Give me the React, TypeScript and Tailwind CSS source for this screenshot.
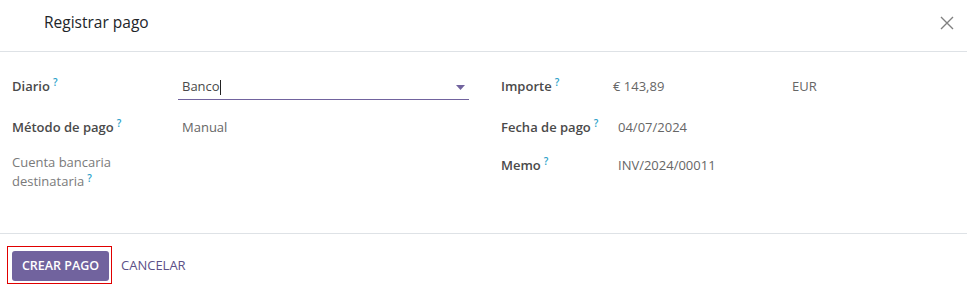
const font = { fontFamily: '"Open Sans", "Noto Sans", sans-serif' }

function Hint({ top }: { top: string }) {
  return (
    <span className={`inline-block align-top ml-[3px] text-[10px] leading-[10px] font-semibold text-[#2b9fc9] relative ${top}`}>
      ?
    </span>
  )
}

function Label({ children, muted }: { children: React.ReactNode; muted?: boolean }) {
  return (
    <div
      className={
        muted
          ? "text-[13px] leading-[19px] text-[#7a7a7a]"
          : "text-[13px] leading-[24px] font-semibold text-[#4a4a4a]"
      }
    >
      {children}
      <Hint top={muted ? "top-[1px]" : "top-[3px]"} />
    </div>
  )
}

export default function App() {
  return (
    <div className="w-[967px] h-[287px] bg-white" style={font}>
      {/* header */}
      <div className="h-[52px] border-b border-[#dee2e6] flex items-center justify-between pl-[44px] pr-[10px]">
        <h4 className="text-[15.5px] text-[#212529] -mt-[6px]">Registrar pago</h4>
        <button className="w-[20px] h-[20px] flex items-center justify-center -mt-[6px] text-[#808080]">
          <svg width="14" height="14" viewBox="0 0 14 14" fill="none" stroke="currentColor" strokeWidth="1.4">
            <path d="M1 1 L13 13 M13 1 L1 13" />
          </svg>
        </button>
      </div>

      {/* body */}
      <div className="h-[182px] border-b border-[#dee2e6] grid grid-cols-[469px_1fr] pt-[22px]">
        <div className="pl-[12px] flex flex-col">
          <div className="flex h-[26px]">
            <div className="w-[166px]">
              <Label>Diario</Label>
            </div>
            <div className="flex-1 border-b border-[#71639e] flex items-center justify-between pl-[4px] pr-[4px]">
              <span className="text-[13px] text-[#4a4a4a]">
                Banco<span className="inline-block w-px h-[15px] bg-[#222] align-middle" />
              </span>
              <svg width="9" height="5" viewBox="0 0 9 5" className="mt-[1px]">
                <path d="M0 0 H9 L4.5 5 Z" fill="#71639e" />
              </svg>
            </div>
          </div>
          <div className="flex h-[24px] mt-[15px]">
            <div className="w-[170px]">
              <Label>Método de pago</Label>
            </div>
            <span className="text-[13px] leading-[24px] text-[#666]">Manual</span>
          </div>
          <div className="mt-[14px] w-[120px]">
            <Label muted>Cuenta bancaria destinataria</Label>
          </div>
        </div>

        <div className="pl-[32px] flex flex-col">
          <div className="flex h-[26px]">
            <div className="w-[112px]">
              <Label>Importe</Label>
            </div>
            <span className="w-[179px] text-[13px] leading-[24px] text-[#666]">€ 143,89</span>
            <span className="text-[13px] leading-[24px] text-[#666]">EUR</span>
          </div>
          <div className="flex h-[24px] mt-[15px]">
            <div className="w-[117px]">
              <Label>Fecha de pago</Label>
            </div>
            <span className="text-[13px] leading-[24px] text-[#666]">04/07/2024</span>
          </div>
          <div className="flex h-[24px] mt-[14px]">
            <div className="w-[117px]">
              <Label>Memo</Label>
            </div>
            <span className="text-[13px] leading-[24px] text-[#666]">INV/2024/00011</span>
          </div>
        </div>
      </div>

      {/* footer */}
      <div className="flex items-center gap-[9px] pl-[7px] pt-[12px]">
        <div className="border border-[#e00000] pl-[4px] pt-[4px] pr-[2px] pb-[2px]">
          <button className="w-[97px] h-[30px] rounded-[3px] bg-[#71639e] text-white text-[12.5px] font-semibold">
            CREAR PAGO
          </button>
        </div>
        <button className="text-[13px] text-[#5c5087] mt-[2px]">CANCELAR</button>
      </div>
    </div>
  )
}
